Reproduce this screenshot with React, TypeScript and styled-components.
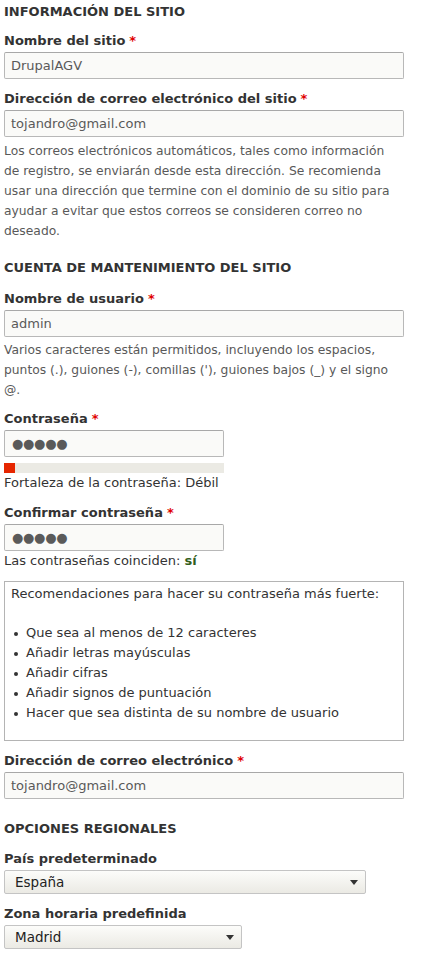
import styled, { createGlobalStyle } from "styled-components";

const GlobalStyle = createGlobalStyle`
  body {
    margin: 0;
    background: #ffffff;
    font-family: "DejaVu Sans", "Liberation Sans", sans-serif;
    color: #333333;
  }
`;

const Page = styled.form`
  padding: 0 4px 20px;
  width: 400px;
  display: flex;
  flex-direction: column;
`;

const SectionTitle = styled.h2<{ $top: number }>`
  margin: ${(p) => p.$top}px 0 0;
  font-size: 13px;
  line-height: 18px;
  font-weight: bold;
  text-transform: uppercase;
  color: #333333;
`;

const Field = styled.div<{ $top: number }>`
  margin-top: ${(p) => p.$top}px;
  display: flex;
  flex-direction: column;
`;

const Label = styled.label`
  font-size: 13px;
  line-height: 18px;
  font-weight: bold;
  color: #333333;
  margin-bottom: 2px;
`;

const Required = styled.span`
  color: #e00000;
  margin-left: 4px;
`;

const TextInput = styled.div<{ $width?: number }>`
  box-sizing: border-box;
  width: ${(p) => p.$width ?? 400}px;
  height: 27px;
  border: 1px solid #b8b8b8;
  border-top-color: #a8a8a8;
  border-radius: 2px;
  background: #fafaf8;
  padding: 0 6px;
  display: flex;
  align-items: center;
  font-size: 13px;
  color: #595959;
`;

const Dots = styled.span`
  font-size: 13px;
  letter-spacing: -0.3px;
  padding-left: 1px;
  color: #5a5a5a;
`;

const Description = styled.div<{ $top: number }>`
  max-width: 386px;
  font-size: 12.3px;
  line-height: 20px;
  color: #595959;
  margin-top: ${(p) => p.$top}px;
`;

const StrengthTrack = styled.div`
  margin-top: 6px;
  width: 220px;
  height: 10px;
  background: #ebeae4;
`;

const StrengthFill = styled.div`
  height: 100%;
  background: #e62600;
`;

const Status = styled.div`
  font-size: 13px;
  line-height: 20px;
  color: #333333;
`;

const Match = styled.span`
  color: #325e1c;
  font-weight: bold;
`;

const Suggestions = styled.div`
  margin-top: 10px;
  box-sizing: border-box;
  width: 400px;
  height: 160px;
  border: 1px solid #b4b4b4;
  padding: 2px 6px;
  font-size: 13px;
  line-height: 20px;
  color: #333333;
`;

const SuggestionList = styled.ul`
  margin: 19px 0 0;
  padding: 0 0 0 15px;
  list-style: none;

  li {
    position: relative;
  }

  li::before {
    content: "";
    position: absolute;
    left: -12px;
    top: 9px;
    width: 4px;
    height: 4px;
    border-radius: 50%;
    background: #333333;
  }
`;

const Select = styled.div<{ $width: number }>`
  box-sizing: border-box;
  width: ${(p) => p.$width}px;
  height: 24px;
  border: 1px solid #c4c4c4;
  border-radius: 2px;
  background: linear-gradient(#fcfcfa, #ebeae4);
  padding: 0 7px 0 10px;
  display: flex;
  align-items: center;
  justify-content: space-between;
  font-size: 13.5px;
  color: #222222;
`;

const Arrow = styled.span`
  width: 0;
  height: 0;
  border-left: 4px solid transparent;
  border-right: 4px solid transparent;
  border-top: 5px solid #333333;
`;

const suggestions = [
  "Que sea al menos de 12 caracteres",
  "Añadir letras mayúsculas",
  "Añadir cifras",
  "Añadir signos de puntuación",
  "Hacer que sea distinta de su nombre de usuario",
];

const App = () => {
  return (
    <>
      <GlobalStyle />
      <Page>
        <SectionTitle $top={3}>Información del sitio</SectionTitle>
        <Field $top={11}>
          <Label>
            Nombre del sitio<Required>*</Required>
          </Label>
          <TextInput>DrupalAGV</TextInput>
        </Field>
        <Field $top={11}>
          <Label>
            Dirección de correo electrónico del sitio<Required>*</Required>
          </Label>
          <TextInput>tojandro@gmail.com</TextInput>
          <Description $top={4}>
            Los correos electrónicos automáticos, tales como información de registro, se
            enviarán desde esta dirección. Se recomienda usar una dirección que termine con el
            dominio de su sitio para ayudar a evitar que estos correos se consideren correo no
            deseado.
          </Description>
        </Field>

        <SectionTitle $top={18}>Cuenta de mantenimiento del sitio</SectionTitle>
        <Field $top={13}>
          <Label>
            Nombre de usuario<Required>*</Required>
          </Label>
          <TextInput>admin</TextInput>
          <Description $top={3}>
            Varios caracteres están permitidos, incluyendo los espacios, puntos (.), guiones (-),
            comillas ('), guiones bajos (_) y el signo @.
          </Description>
        </Field>
        <Field $top={10}>
          <Label>
            Contraseña<Required>*</Required>
          </Label>
          <TextInput $width={220}>
            <Dots>●●●●●</Dots>
          </TextInput>
          <StrengthTrack>
            <StrengthFill style={{ width: "5%" }} />
          </StrengthTrack>
          <Status>Fortaleza de la contraseña: Débil</Status>
        </Field>
        <Field $top={11}>
          <Label>
            Confirmar contraseña<Required>*</Required>
          </Label>
          <TextInput $width={220}>
            <Dots>●●●●●</Dots>
          </TextInput>
          <Status>
            Las contraseñas coinciden: <Match>sí</Match>
          </Status>
        </Field>
        <Suggestions>
          Recomendaciones para hacer su contraseña más fuerte:
          <SuggestionList>
            {suggestions.map((s) => (
              <li key={s}>{s}</li>
            ))}
          </SuggestionList>
        </Suggestions>
        <Field $top={11}>
          <Label>
            Dirección de correo electrónico<Required>*</Required>
          </Label>
          <TextInput>tojandro@gmail.com</TextInput>
        </Field>

        <SectionTitle $top={21}>Opciones regionales</SectionTitle>
        <Field $top={12}>
          <Label>País predeterminado</Label>
          <Select $width={362}>
            España
            <Arrow />
          </Select>
        </Field>
        <Field $top={11}>
          <Label>Zona horaria predefinida</Label>
          <Select $width={238}>
            Madrid
            <Arrow />
          </Select>
        </Field>
      </Page>
    </>
  );
};

export default App;
